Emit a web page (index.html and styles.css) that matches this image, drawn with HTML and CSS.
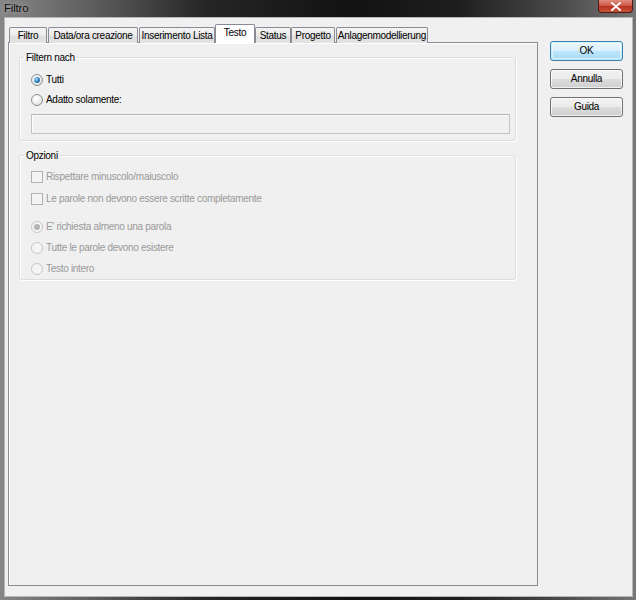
FILE: index.html
```html
<!DOCTYPE html>
<html>
<head>
<meta charset="utf-8">
<title>Filtro</title>
<link rel="stylesheet" href="styles.css">
</head>
<body>
<div class="window">
  <div class="titlebar">
    <span class="title">Filtro</span>
    <div class="close">
      <svg width="12" height="9" viewBox="0 0 12 9"><path d="M2 1 L10 8 M10 1 L2 8" stroke="#fff" stroke-width="2" stroke-linecap="round"/></svg>
    </div>
  </div>
  <div class="client">
    <div class="main">
      <div class="tabs">
        <div class="tab t1">Filtro</div>
        <div class="tab t2">Data/ora creazione</div>
        <div class="tab t3">Inserimento Lista</div>
        <div class="tab t4 selected">Testo</div>
        <div class="tab t5">Status</div>
        <div class="tab t6">Progetto</div>
        <div class="tab t7">Anlagenmodellierung</div>
      </div>
      <div class="panel">
        <div class="group g1">
          <span class="legend">Filtern nach</span>
          <div class="row r-first"><span class="radio checked"></span>Tutti</div>
          <div class="row r-next"><span class="radio"></span>Adatto solamente:</div>
          <div class="textbox"></div>
        </div>
        <div class="group g2">
          <span class="legend">Opzioni</span>
          <div class="row disabled r-c1"><span class="check"></span>Rispettare minuscolo/maiuscolo</div>
          <div class="row disabled r-c2"><span class="check"></span>Le parole non devono essere scritte completamente</div>
          <div class="row disabled r-sep"><span class="radio checked"></span>E' richiesta almeno una parola</div>
          <div class="row disabled r-next2"><span class="radio"></span>Tutte le parole devono esistere</div>
          <div class="row disabled r-next2"><span class="radio"></span>Testo intero</div>
        </div>
      </div>
    </div>
    <div class="buttons">
      <div class="btn default">OK</div>
      <div class="btn">Annulla</div>
      <div class="btn">Guida</div>
    </div>
  </div>
</div>
</body>
</html>
```

FILE: styles.css
```css
* { box-sizing: border-box; }
html, body { margin: 0; padding: 0; }
body {
  width: 636px;
  height: 600px;
  overflow: hidden;
  font-family: "Liberation Sans", Arial, sans-serif;
  font-size: 10px;
  letter-spacing: -0.3px;
  color: #000;
}
.window {
  width: 636px;
  height: 600px;
  display: flex;
  flex-direction: column;
  padding: 0 3px 3px 4px;
  background: linear-gradient(90deg, #868686 0%, #5c5c5c 15%, #262626 32%, #121212 55%, #1e1e1e 72%, #4a4a4a 88%, #767676 100%);
}
.titlebar {
  height: 17px;
  flex: none;
  display: flex;
  justify-content: space-between;
  align-items: flex-start;
  margin-left: -4px;
  margin-right: -3px;
}
.title {
  font-size: 11.5px;
  letter-spacing: -0.2px;
  line-height: 16px;
  padding-left: 4px;
  color: #111;
  text-shadow: 0 0 6px rgba(255,255,255,0.5);
}
.close {
  width: 35px;
  height: 13px;
  margin-right: 3px;
  border: 1px solid #4d1a14;
  border-top: none;
  border-radius: 0 0 4px 4px;
  background: linear-gradient(180deg, #e08c7f 0%, #cf5a48 45%, #b8321f 55%, #c9543c 100%);
  display: flex;
  align-items: center;
  justify-content: center;
}
.client {
  flex: 1;
  display: flex;
  align-items: flex-start;
  background: #f0f0f0;
  border: 1px solid #b7b7b7;
  padding: 7px 0 0 3px;
}
.main {
  width: 530px;
  display: flex;
  flex-direction: column;
}
.tabs {
  display: flex;
  align-items: flex-end;
  height: 18px;
  padding-left: 1px;
  position: relative;
  z-index: 1;
  margin-bottom: -1px;
}
.tab {
  height: 16px;
  border: 1px solid #898c95;
  border-bottom: none;
  border-radius: 2px 2px 0 0;
  background: linear-gradient(180deg, #f4f4f4 0%, #ebebeb 50%, #dedede 51%, #e3e3e3 100%);
  text-align: center;
  line-height: 15px;
  white-space: nowrap;
}
.tab.selected {
  height: 19px;
  background: #fff;
  line-height: 15px;
}
.t1 { width: 38px; }
.t2 { width: 90px; margin-left: 1px; }
.t3 { width: 76px; margin-left: 1px; }
.t4 { width: 40px; }
.t5 { width: 36px; }
.t6 { width: 44px; }
.t7 { width: 92px; margin-left: 1px; }

.panel {
  height: 544px;
  border: 1px solid #898c95;
  box-shadow: inset 1px 1px 0 #fff;
  background: #f0f0f0;
  padding: 14px 21px 0 10px;
}
.group {
  border: 1px solid #d5dfe5;
  border-radius: 3px;
  box-shadow: inset 1px 1px 0 #fff, 1px 1px 0 #fff;
  display: flex;
  flex-direction: column;
  padding-left: 11px;
}
.g1 { padding-bottom: 6px; }
.g2 { margin-top: 14px; padding-bottom: 4px; }
.legend {
  align-self: flex-start;
  margin: -7px 0 0 -7px;
  padding: 0 2px;
  background: #f0f0f0;
  line-height: 13px;
  height: 13px;
}
.row {
  height: 13px;
  line-height: 13px;
  display: flex;
  align-items: center;
  white-space: nowrap;
}
.r-first { margin-top: 9px; }
.r-next { margin-top: 7px; }
.r-c1 { margin-top: 8px; }
.r-c2 { margin-top: 9px; }
.r-sep { margin-top: 15px; }
.r-next2 { margin-top: 8px; }
.disabled { color: #999999; }

.radio {
  width: 12px;
  height: 12px;
  border-radius: 50%;
  border: 1px solid #8e8f8f;
  background: radial-gradient(circle at 40% 35%, #ffffff 0%, #f2f2f2 40%, #d6d6d6 100%);
  margin-right: 3px;
  flex: none;
  display: flex;
  align-items: center;
  justify-content: center;
}
.radio.checked::after {
  content: "";
  width: 6px;
  height: 6px;
  border-radius: 50%;
  background: radial-gradient(circle at 35% 35%, #a9dcf6 0%, #2a7fc0 55%, #0d4f8a 100%);
}
.disabled .radio {
  border-color: #c6c6c6;
  background: #f4f4f4;
}
.disabled .radio.checked::after {
  background: #b5b5b5;
}
.check {
  width: 12px;
  height: 12px;
  border: 1px solid #b1b1b1;
  background: #f4f4f4;
  margin-right: 3px;
  flex: none;
}
.textbox {
  margin-top: 8px;
  width: 479px;
  height: 20px;
  border: 1px solid #c4c4c4;
  border-top-color: #b5b5b5;
  background: #f0f0f0;
  box-shadow: inset 1px 1px 0 #fbfbfb;
}

.buttons {
  margin-left: 12px;
  margin-top: 16px;
  display: flex;
  flex-direction: column;
  gap: 8px;
}
.btn {
  width: 73px;
  height: 20px;
  border: 1px solid #707070;
  border-radius: 3px;
  background: linear-gradient(180deg, #f2f2f2 0%, #ebebeb 50%, #dddddd 51%, #cfcfcf 100%);
  box-shadow: inset 0 0 0 1px rgba(255,255,255,0.7);
  text-align: center;
  line-height: 18px;
}
.btn.default {
  border-color: #3c7fb1;
  background: linear-gradient(180deg, #eaf6fd 0%, #d9f0fc 50%, #bee6fd 51%, #a7d9f5 100%);
  box-shadow: inset 0 0 0 1px #48d8fb33, inset 0 0 0 2px rgba(255,255,255,0.5);
}
```
